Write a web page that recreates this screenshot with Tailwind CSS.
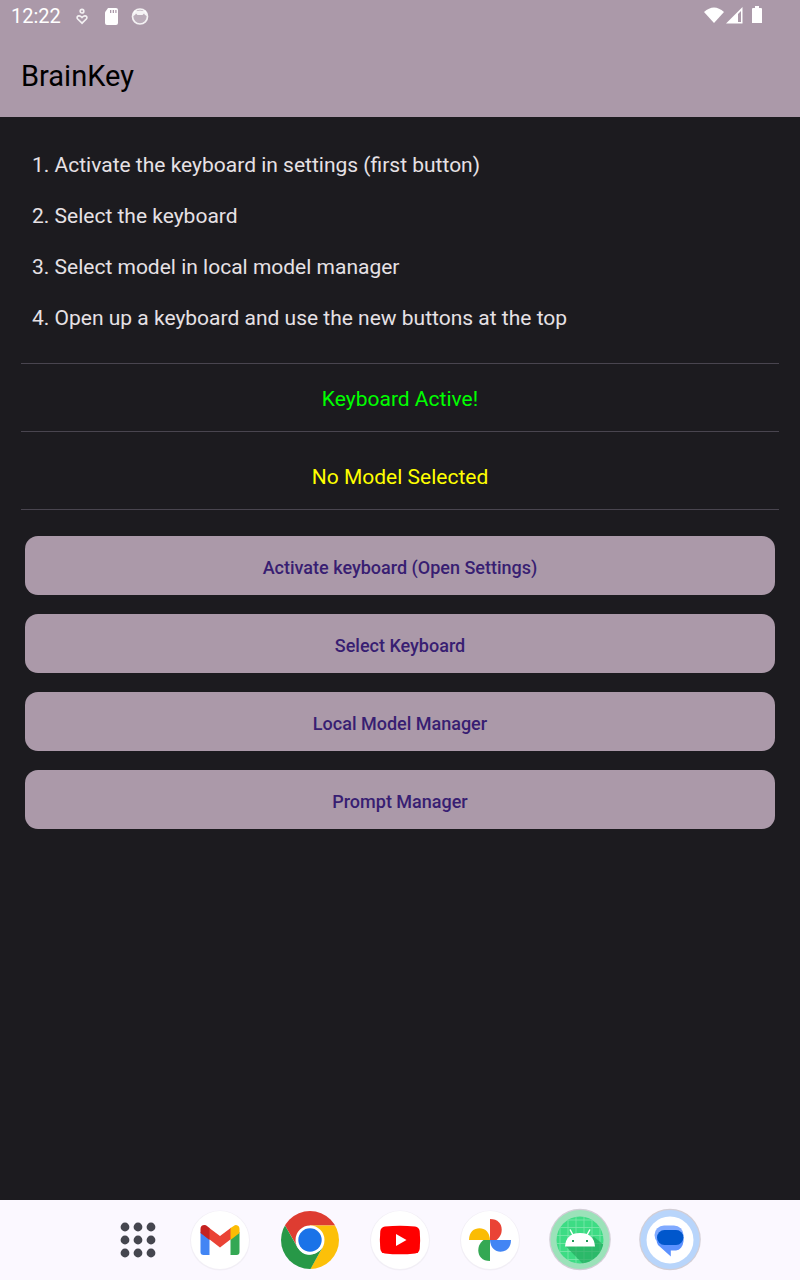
<!DOCTYPE html>
<html lang="en">
<head>
<meta charset="utf-8">
<meta name="viewport" content="width=device-width, initial-scale=1">
<title>BrainKey</title>
<script src="https://cdn.jsdelivr.net/npm/@tailwindcss/browser@4"></script>
</head>
<body class="flex min-h-screen flex-col bg-[#1c1b1f] font-['Roboto','Noto_Sans',sans-serif] text-[#e6e1e5]">
<header class="bg-[#ab99a9]">
  <div class="flex h-8 items-center pr-8 pl-[11px] text-white">
    <time class="text-[20px] leading-8">12:22</time>
    <svg class="ml-[13px] h-5 w-4" viewBox="0 0 16 20" fill="none" stroke="#fff" stroke-opacity=".85" stroke-width="1.7" aria-hidden="true"><circle cx="8" cy="5.200" r="1.800"/><path d="M8 17.200 L3.700 13 C2.600 11.800 3 10 4.800 9.800 C6.300 9.600 7.200 10.600 8 11.500 C8.800 10.600 9.700 9.600 11.200 9.800 C13 10 13.400 11.800 12.300 13Z"/></svg>
    <svg class="ml-2.5 h-5 w-5" viewBox="0 0 20 20" aria-hidden="true"><path fill="#fff" fill-rule="evenodd" d="M8 2H16Q18 2 18 4V17Q18 19 16 19H7Q5 19 5 17V7Q5 6 5.700 5.200L7.500 2.700ZM10 4V7H11.300V4ZM12.700 4V7H14V4ZM15.300 4V7H16.500V4Z"/></svg>
    <svg class="ml-2.5 h-5 w-5" viewBox="0 0 20 20" aria-hidden="true"><circle cx="10" cy="10.500" r="7.500" fill="#fff" fill-opacity=".2" stroke="#fff" stroke-opacity=".85" stroke-width="1.700"/><path fill="#fff" fill-opacity=".85" d="M3 10L4 5Q5 4 7 5Q10 4 13 5Q15 4 16 5L17 10L15 9L14 7.500L12.500 9H7.500L6 7.500L5 9Z"/></svg>
    <svg class="ml-auto h-5 w-5" viewBox="0 0 20 20" aria-hidden="true"><path fill="#fff" d="M0 6Q10-3 20 6L10 17Z"/></svg>
    <svg class="h-5 w-5" viewBox="0 0 20 20" aria-hidden="true"><path fill="#fff" d="M18.500 1V17.500H2Z"/><path fill="#ab99a9" d="M14 8L17 5V16H14Z"/></svg>
    <svg class="ml-1 h-5 w-5" viewBox="0 0 20 20" aria-hidden="true"><path fill="#fff" d="M7 0H11V2H13Q14 2 14 3V17H4V3Q4 2 5 2H7Z"/></svg>
  </div>
  <div class="flex h-[85px] items-center px-[21px] pt-[3px]"><h1 class="text-[29px] leading-9 text-black">BrainKey</h1></div>
</header>
<main class="flex-1 px-[21px] pt-[23px] text-[21px]">
  <div class="px-[11px] pb-[19px] leading-[51px]">
    <p>1. Activate the keyboard in settings (first button)</p>
    <p>2. Select the keyboard</p>
    <p>3. Select model in local model manager</p>
    <p>4. Open up a keyboard and use the new buttons at the top</p>
  </div>
  <div class="border-t border-[#49454f] pt-[21px] pb-[18px] text-center leading-7 text-[#00ff00]">Keyboard Active!</div>
  <div class="border-y border-[#49454f] pt-[31px] pb-[18px] text-center leading-7 text-[#ffff00]">No Model Selected</div>
  <div class="flex flex-col gap-[19px] px-1 pt-[26px] text-[18px] font-medium text-[#381e72]">
    <button type="button" class="h-[59px] rounded-[13px] bg-[#ab99a9] pt-1">Activate keyboard (Open Settings)</button>
    <button type="button" class="h-[59px] rounded-[13px] bg-[#ab99a9] pt-1">Select Keyboard</button>
    <button type="button" class="h-[59px] rounded-[13px] bg-[#ab99a9] pt-1">Local Model Manager</button>
    <button type="button" class="h-[59px] rounded-[13px] bg-[#ab99a9] pt-1">Prompt Manager</button>
  </div>
</main>
<nav aria-label="Taskbar" class="flex h-20 items-center justify-center gap-6 bg-[#fbf8ff] pl-2">
  <button type="button" aria-label="All apps" class="-mr-2 flex size-[66px] items-center justify-center"><svg class="size-9" viewBox="0 0 36 36" fill="#45464f"><circle cx="5" cy="5" r="4.400"/><circle cx="18" cy="5" r="4.400"/><circle cx="31" cy="5" r="4.400"/><circle cx="5" cy="18" r="4.400"/><circle cx="18" cy="18" r="4.400"/><circle cx="31" cy="18" r="4.400"/><circle cx="5" cy="31" r="4.400"/><circle cx="18" cy="31" r="4.400"/><circle cx="31" cy="31" r="4.400"/></svg></button>
  <button type="button" aria-label="Gmail" class="size-[66px]"><svg viewBox="0 0 66 66"><circle cx="33" cy="33.500" r="30" fill="#f2eff6"/><circle cx="33" cy="33" r="29" fill="#fff"/><path fill="#4285f4" d="M13.500 25L22.500 31V48H16.500Q13.500 48 13.500 45Z"/><path fill="#34a853" d="M43.500 31L52.500 25V45Q52.500 48 49.500 48H43.500Z"/><path fill="#ea4335" d="M22 20.700L33 29L44 20.700V32L33 40.500L22 32Z"/><path fill="#c5221f" d="M13.500 22Q13.500 18 17.500 18Q19 18 20.300 19.200L22.500 21V33L13.500 26Z"/><path fill="#fbbc04" d="M43.500 21L46.300 19.200Q48 18 49 18Q52.500 18.500 52.500 22V26L43.500 33Z"/></svg></button>
  <button type="button" aria-label="Chrome" class="size-[66px]"><svg viewBox="0 0 66 66"><defs><clipPath id="chrome"><circle cx="33" cy="33" r="29"/></clipPath></defs><g clip-path="url(#chrome)"><path fill="#de3c31" d="M0 0H66V18.500H33L20.400 40L8 18.500L0 12Z"/><path fill="#fcc009" d="M33 18.500H66V66H31L45.600 40.500Z"/><path fill="#279847" d="M8 18.500L20.400 40.300Q26 49 33 47.700Q40 47 45.600 40.300L33.500 62V66H0V12Z"/></g><circle cx="33" cy="33" r="14.500" fill="#fff"/><circle cx="33" cy="33" r="11.700" fill="#1a73e8"/></svg></button>
  <button type="button" aria-label="YouTube" class="size-[66px]"><svg viewBox="0 0 66 66"><circle cx="33" cy="33.500" r="30" fill="#f2eff6"/><circle cx="33" cy="33" r="29" fill="#fff"/><path fill="#f00" d="M18 19.500Q33 17.800 48 19.500Q52 20 52.700 24Q53.600 33 52.700 42Q52 46 48 46.500Q33 48.200 18 46.500Q14 46 13.300 42Q12.400 33 13.300 24Q14 20 18 19.500Z"/><path fill="#fff" d="M29 27L39.500 33L29 39Z"/></svg></button>
  <button type="button" aria-label="Photos" class="size-[66px]"><svg viewBox="0 0 66 66"><circle cx="33" cy="33.500" r="30" fill="#f2eff6"/><circle cx="33" cy="33" r="29" fill="#fff"/><path fill="#ea4335" d="M33 12C41 12 44.700 17 44.700 22.500C44.700 28 42 31 39.500 33H33Z"/><path fill="#4285f4" d="M33 33H54C54 41 49 44.700 43.500 44.700C38 44.700 33.500 41 33 33Z"/><path fill="#34a853" d="M33 33V54C25 54 21.300 49 21.300 43.500C21.300 38 24 35 26.500 33Z"/><path fill="#fbbc04" d="M12 33C12 25 17 21.300 22.500 21.300C28 21.300 32.500 25 33 33Z"/></svg></button>
  <button type="button" aria-label="Android app" class="size-[66px]"><svg viewBox="0 0 66 66"><defs><clipPath id="android"><circle cx="33" cy="33" r="23.500"/></clipPath></defs><circle cx="33" cy="32.500" r="30.800" fill="#d2ced6"/><circle cx="33" cy="32.500" r="29.600" fill="#9be2b9"/><g clip-path="url(#android)"><path fill="#3ddc84" d="M9 9H57V57H9Z"/><path fill="none" stroke="#7ee7ac" stroke-width=".8" d="M13 9V57M21 9V57M29 9V57M37 9V57M45 9V57M53 9V57M9 13H57M9 20.500H57M9 28.500H57M9 36.500H57M9 44.500H57M9 52.500H57"/><path fill="#22a65b" fill-opacity=".65" d="M18.500 39L36 57H57V38L47 30Z"/></g><path fill="#fff" d="M18 39.500Q19 26 33 26Q47 26 48 39.500Z"/><path fill="none" stroke="#fff" stroke-width="1.500" d="M26 28L23 22.500M40 28L43 22.500"/><path fill="#23995b" d="M25 33H27V35H25ZM39 33H41V35H39Z"/></svg></button>
  <button type="button" aria-label="Messages" class="size-[66px]"><svg viewBox="0 0 66 66"><circle cx="33" cy="32.500" r="30.800" fill="#d2ced6"/><circle cx="33" cy="32.500" r="29.600" fill="#b8d5fb"/><circle cx="33" cy="33" r="23.500" fill="#fff"/><rect x="17.500" y="18.500" width="29" height="19" rx="9.500" fill="#80aaff"/><path fill="#5c92ff" d="M29 23H41A8 10.500 0 0 1 39 43.500H33.800V49.500L21 38Q19 35 20 31Q22 24 29 23Z"/><rect x="20" y="23" width="26.500" height="15" rx="7.500" fill="#0057cc"/></svg></button>
</nav>
</body>
</html>
